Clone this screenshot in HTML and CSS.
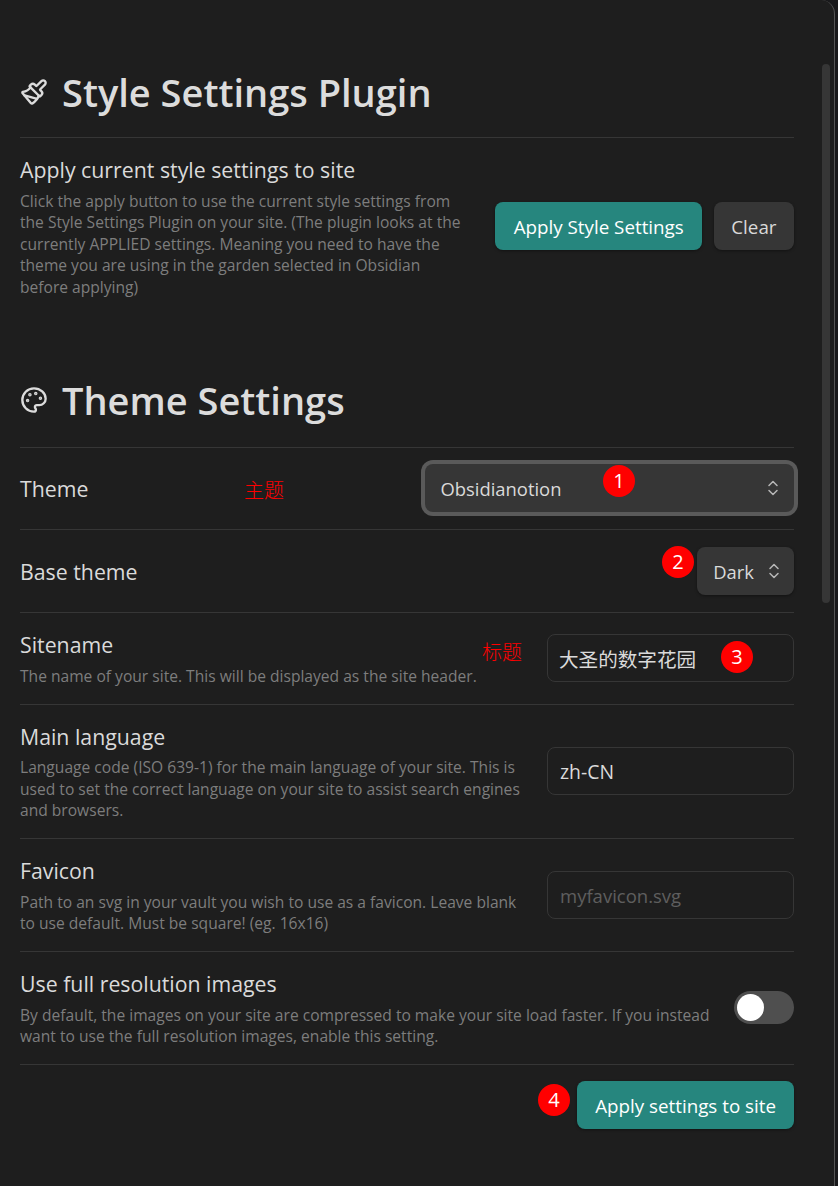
FILE: index.html
```html
<!DOCTYPE html>
<html lang="en">
<head>
    <meta charset="UTF-8">
    <meta name="viewport" content="width=device-width, initial-scale=1.0">
    <title>Style Settings</title>
    <link rel="stylesheet" href="styles.css">
</head>
<body>
    <div class="modal">
        <div class="scrollbar"></div>
        <div class="content">
            <h2 class="heading heading-first">
                <svg class="heading-icon" viewBox="0 0 24 24"><path d="m14.622 17.897-10.68-2.913"/><path d="M18.376 2.622a1 1 0 1 1 3.002 3.002L17.36 9.643a.5.5 0 0 0 0 .707l.944.944a2.41 2.41 0 0 1 0 3.408l-.944.944a.5.5 0 0 1-.707 0L8.354 7.348a.5.5 0 0 1 0-.707l.944-.944a2.41 2.41 0 0 1 3.408 0l.944.944a.5.5 0 0 0 .707 0z"/><path d="M9 8c-1.804 2.71-3.97 3.46-6.583 3.948a.507.507 0 0 0-.302.819l7.32 8.883a1 1 0 0 0 1.185.204C12.735 20.405 16 16.792 16 15"/></svg>
                Style Settings Plugin
            </h2>
            <div class="setting">
                <div class="setting-info narrow">
                    <div class="setting-name">Apply current style settings to site</div>
                    <div class="setting-desc">Click the apply button to use the current style settings from the Style Settings Plugin on your site. (The plugin looks at the currently APPLIED settings. Meaning you need to have the theme you are using in the garden selected in Obsidian before applying)</div>
                </div>
                <div class="setting-control">
                    <button class="btn btn-accent btn-wide">Apply Style Settings</button>
                    <button class="btn btn-slim">Clear</button>
                </div>
            </div>

            <h2 class="heading heading-second">
                <svg class="heading-icon" viewBox="0 0 24 24"><circle cx="13.5" cy="6.5" r=".5" fill="currentColor"/><circle cx="17.5" cy="10.5" r=".5" fill="currentColor"/><circle cx="8.5" cy="7.5" r=".5" fill="currentColor"/><circle cx="6.5" cy="12.5" r=".5" fill="currentColor"/><path d="M12 2C6.5 2 2 6.5 2 12s4.5 10 10 10c.926 0 1.648-.746 1.648-1.688 0-.437-.18-.835-.437-1.125-.29-.289-.438-.652-.438-1.125a1.64 1.64 0 0 1 1.668-1.668h1.996c3.051 0 5.555-2.503 5.555-5.554C21.965 6.012 17.461 2 12 2z"/></svg>
                Theme Settings
            </h2>
            <div class="setting setting-tight">
                <div class="setting-info">
                    <div class="setting-name single">Theme</div>
                </div>
                <div class="select select-focus">
                    <span>Obsidianotion</span>
                    <svg class="chevrons" viewBox="0 0 12 18"><path d="M2 6.5 6 2.5l4 4M2 11.5l4 4 4-4"/></svg>
                </div>
            </div>
            <div class="setting">
                <div class="setting-info">
                    <div class="setting-name single">Base theme</div>
                </div>
                <div class="select">
                    <span>Dark</span>
                    <svg class="chevrons" viewBox="0 0 12 18"><path d="M2 6.5 6 2.5l4 4M2 11.5l4 4 4-4"/></svg>
                </div>
            </div>
            <div class="setting">
                <div class="setting-info">
                    <div class="setting-name">Sitename</div>
                    <div class="setting-desc">The name of your site. This will be displayed as the site header.</div>
                </div>
                <input class="text-input text-input-cjk" type="text" value="大圣的数字花园">
            </div>
            <div class="setting">
                <div class="setting-info">
                    <div class="setting-name">Main language</div>
                    <div class="setting-desc">Language code (ISO 639-1) for the main language of your site. This is used to set the correct language on your site to assist search engines and browsers.</div>
                </div>
                <input class="text-input" type="text" value="zh-CN">
            </div>
            <div class="setting">
                <div class="setting-info">
                    <div class="setting-name">Favicon</div>
                    <div class="setting-desc">Path to an svg in your vault you wish to use as a favicon. Leave blank to use default. Must be square! (eg. 16x16)</div>
                </div>
                <input class="text-input" type="text" placeholder="myfavicon.svg">
            </div>
            <div class="setting">
                <div class="setting-info">
                    <div class="setting-name">Use full resolution images</div>
                    <div class="setting-desc">By default, the images on your site are compressed to make your site load faster. If you instead want to use the full resolution images, enable this setting.</div>
                </div>
                <div class="toggle"><div class="toggle-knob"></div></div>
            </div>
            <div class="setting setting-footer">
                <button class="btn btn-accent">Apply settings to site</button>
            </div>
        </div>

        <!-- annotations drawn on top of the screenshot -->
        <span class="note note-theme">主题</span>
        <span class="note note-title">标题</span>
        <span class="badge badge-1">1</span>
        <span class="badge badge-2">2</span>
        <span class="badge badge-3">3</span>
        <span class="badge badge-4">4</span>
    </div>
</body>
</html>
```

FILE: styles.css
```css
html, body {
    margin: 0;
    height: 100%;
    background: #19191b;
}
body {
    font-family: "Open Sans", "Noto Sans CJK SC", sans-serif;
    color: #dadada;
    overflow: hidden;
}
.modal {
    position: relative;
    box-sizing: border-box;
    width: 835px;
    height: 1186px;
    background: #1e1e1e;
    border-right: 1px solid #555555;
    border-top-right-radius: 14px;
}
.content {
    width: 774px;
    padding: 65px 0 0 20px;
}
.scrollbar {
    position: absolute;
    left: 822px;
    top: 64px;
    width: 8px;
    height: 539px;
    border-radius: 4px;
    background: #363636;
}
.heading {
    display: flex;
    align-items: center;
    gap: 14px;
    margin: 0;
    font-size: 38px;
    line-height: 54px;
    font-weight: 600;
    color: #dcdcdc;
}
.heading-first {
    margin-bottom: 18px;
}
.heading-second {
    margin-top: 58px;
    margin-bottom: 20px;
}
.heading-icon {
    width: 28px;
    height: 28px;
    fill: none;
    stroke: currentColor;
    stroke-width: 2;
    stroke-linecap: round;
    stroke-linejoin: round;
}
.setting {
    display: flex;
    justify-content: space-between;
    align-items: center;
    gap: 20px;
    padding: 17px 0;
    border-top: 1px solid #363636;
}
.setting-tight {
    padding-top: 16px;
}
.setting-info {
    flex: 1;
    min-width: 0;
}
.setting-info.narrow {
    flex: 0 0 445px;
}
.setting-name {
    font-size: 21.3px;
    line-height: 28px;
    padding-top: 1px;
    margin-bottom: 6.5px;
    color: #dadada;
}
.setting-name.single {
    padding-top: 2px;
    margin-bottom: 0;
}
.setting-desc {
    font-size: 15.6px;
    line-height: 21.3px;
    color: #7d7d7d;
}
.narrow .setting-desc {
    line-height: 21.5px;
}
.setting-control {
    display: flex;
    gap: 12px;
    margin-top: -2px;
}
.btn {
    height: 48px;
    padding: 2px 18px 0;
    border: none;
    border-radius: 8px;
    font: inherit;
    font-size: 18.8px;
    color: #dadada;
    background: #363636;
    box-shadow: 0 1px 3px rgba(0, 0, 0, 0.4);
    white-space: nowrap;
}
.btn-wide {
    padding: 2px 18px 0 19px;
}
.btn-slim {
    padding: 2px 17.5px 0;
}
.btn-accent {
    color: #ffffff;
    background: #26867e;
}
.select {
    display: flex;
    align-items: center;
    justify-content: space-between;
    box-sizing: border-box;
    height: 48px;
    padding: 0 14px 0 16px;
    gap: 14px;
    border-radius: 8px;
    font-size: 18.4px;
    background: #363636;
    box-shadow: 0 1px 3px rgba(0, 0, 0, 0.4);
}
.select-focus {
    width: 369px;
    padding-left: 15.5px;
    padding-right: 15px;
    box-shadow: 0 0 0 4px #5a5a5a;
}
.chevrons {
    width: 12px;
    height: 18px;
    fill: none;
    stroke: #b8b8b8;
    stroke-width: 1.5;
    stroke-linecap: round;
    stroke-linejoin: round;
}
.text-input {
    box-sizing: border-box;
    flex: none;
    width: 247px;
    height: 48px;
    padding: 0 12px;
    border: 1px solid #363636;
    border-radius: 8px;
    font: inherit;
    font-size: 19.4px;
    color: #dadada;
    background: #1e1e1e;
}
.text-input-cjk {
    padding-left: 11px;
    font-size: 19.6px;
}
.text-input::placeholder {
    font-size: 18.5px;
    color: #5e5e5e;
}
.toggle {
    flex: none;
    box-sizing: border-box;
    width: 60px;
    height: 33px;
    margin-top: -2px;
    padding: 3px;
    border-radius: 17px;
    background: #4f4f4f;
}
.toggle-knob {
    width: 27px;
    height: 27px;
    border-radius: 50%;
    background: #ffffff;
}
.setting-footer {
    justify-content: flex-end;
    padding-top: 16px;
}
.note {
    position: absolute;
    font-size: 20px;
    font-weight: 300;
    line-height: 26px;
    color: #ff0000;
}
.note-theme {
    left: 244px;
    top: 478px;
}
.note-title {
    left: 482px;
    top: 640px;
}
.badge {
    position: absolute;
    width: 32px;
    height: 32px;
    border-radius: 50%;
    background: #ff0000;
    color: #ffffff;
    font-size: 20px;
    line-height: 32px;
    text-align: center;
}
.badge-1 { left: 603px; top: 465px; }
.badge-2 { left: 662px; top: 546px; }
.badge-3 { left: 721px; top: 641px; }
.badge-4 { left: 538px; top: 1084px; }
```
